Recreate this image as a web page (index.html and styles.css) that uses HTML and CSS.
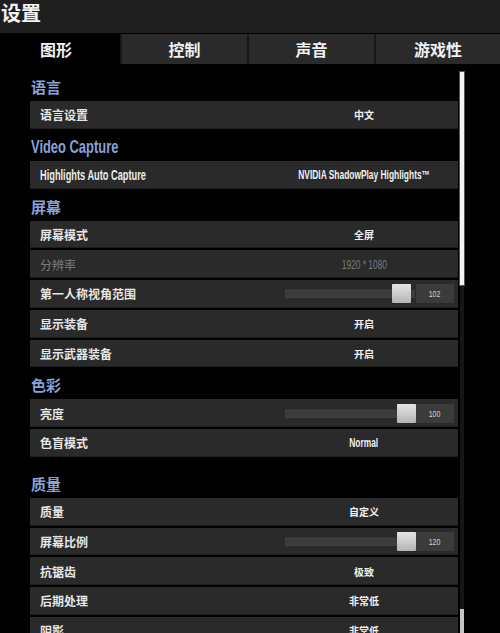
FILE: index.html
```html
<!DOCTYPE html>
<html>
<head>
    <title>设置</title>
    <meta charset="utf-8">
    <link rel="stylesheet" href="styles.css">
</head>
<body>
    <div class="topbar">
        <h1 class="title">设置</h1>
    </div>

    <div class="tabs">
        <div class="tab active">图形</div>
        <div class="tab">控制</div>
        <div class="tab">声音</div>
        <div class="tab">游戏性</div>
    </div>

    <div class="main">
        <div class="list">
            <h2 class="section">语言</h2>
            <div class="row">
                <span class="label">语言设置</span>
                <span class="value">中文</span>
            </div>

            <h2 class="section"><span class="narrow latin-title">Video Capture</span></h2>
            <div class="row">
                <span class="label"><span class="narrow latin-label">Highlights Auto Capture</span></span>
                <span class="value"><span class="narrow latin-value">NVIDIA ShadowPlay Highlights™</span></span>
            </div>

            <h2 class="section">屏幕</h2>
            <div class="row">
                <span class="label">屏幕模式</span>
                <span class="value">全屏</span>
            </div>
            <div class="row disabled">
                <span class="label">分辨率</span>
                <span class="value"><span class="narrow latin-value">1920 * 1080</span></span>
            </div>
            <div class="row">
                <span class="label">第一人称视角范围</span>
                <div class="slider">
                    <div class="track"><div class="thumb" style="left: 107px"></div></div>
                    <span class="num"><span class="narrow">102</span></span>
                </div>
            </div>
            <div class="row">
                <span class="label">显示装备</span>
                <span class="value">开启</span>
            </div>
            <div class="row">
                <span class="label">显示武器装备</span>
                <span class="value">开启</span>
            </div>

            <h2 class="section">色彩</h2>
            <div class="row">
                <span class="label">亮度</span>
                <div class="slider">
                    <div class="track"><div class="thumb" style="left: 112px"></div></div>
                    <span class="num"><span class="narrow">100</span></span>
                </div>
            </div>
            <div class="row">
                <span class="label">色盲模式</span>
                <span class="value"><span class="narrow latin-value">Normal</span></span>
            </div>

            <div class="spacer"></div>
            <h2 class="section">质量</h2>
            <div class="row">
                <span class="label">质量</span>
                <span class="value">自定义</span>
            </div>
            <div class="row">
                <span class="label">屏幕比例</span>
                <div class="slider">
                    <div class="track"><div class="thumb" style="left: 112px"></div></div>
                    <span class="num"><span class="narrow">120</span></span>
                </div>
            </div>
            <div class="row">
                <span class="label">抗锯齿</span>
                <span class="value">极致</span>
            </div>
            <div class="row">
                <span class="label">后期处理</span>
                <span class="value">非常低</span>
            </div>
            <div class="row">
                <span class="label">阴影</span>
                <span class="value">非常低</span>
            </div>
        </div>

        <div class="scrollbar">
            <div class="scroll-thumb"></div>
            <div class="scroll-end"></div>
        </div>
    </div>
</body>
</html>
```

FILE: styles.css
```css
html, body {
    margin: 0;
    padding: 0;
    height: 100%;
    overflow: hidden;
}

body {
    background: #000;
    color: #e8e8e8;
    font-family: 'Noto Sans CJK SC', 'Noto Sans', sans-serif;
}

.topbar {
    height: 33px;
    background: #1f1f1f;
}

.title {
    margin: 0;
    padding: 2px 0 0 1px;
    font-size: 20px;
    line-height: 21px;
    font-weight: 700;
    color: #f2f2f2;
}

.tabs {
    display: grid;
    grid-template-columns: 120px 127px 127px 1fr;
    height: 30px;
    margin-top: 1px;
}

.tab {
    display: flex;
    align-items: center;
    justify-content: center;
    background: #2a2a2a;
    border-left: 2px solid #181818;
    font-size: 16px;
    font-weight: 700;
    color: #f0f0f0;
}

.tab.active {
    background: #000;
    border-left: none;
    justify-content: flex-start;
    padding-left: 40px;
}

.main {
    display: flex;
    padding-top: 7px;
}

.list {
    width: 428px;
    margin-left: 30px;
}

.section {
    margin: 0;
    height: 30px;
    line-height: 32px;
    padding-left: 1px;
    font-size: 15px;
    font-weight: 700;
    color: #86a2d6;
    white-space: nowrap;
}

/* no condensed face installed, so squeeze the latin text */
.narrow {
    display: inline-block;
    font-family: 'Liberation Sans', Arial, sans-serif;
    white-space: nowrap;
    transform: scaleX(0.78);
}

.latin-title {
    font-size: 19px;
    font-weight: 700;
    transform: scaleX(0.68);
    transform-origin: left center;
}

.latin-label {
    font-size: 14px;
    font-weight: 700;
    color: #ececec;
    transform: scaleX(0.66);
    transform-origin: left center;
}

.latin-value {
    font-size: 12px;
    font-weight: 700;
    transform: scaleX(0.7);
}

.spacer {
    height: 9px;
}

.row {
    display: grid;
    grid-template-columns: 1fr 188px;
    align-items: center;
    height: 27.75px;
    margin-bottom: 2px;
    background: #2a2a2a;
    box-shadow: inset 0 -1px 0 #1c1c1c;
}

.label {
    padding-left: 10px;
    font-size: 12px;
    font-weight: 700;
    color: #e6e6e6;
    white-space: nowrap;
}

.value {
    text-align: center;
    font-size: 10px;
    font-weight: 700;
    color: #f0f0f0;
    white-space: nowrap;
}

.row.disabled .label,
.row.disabled .value {
    color: #7c7c7c;
}

.row.disabled .label,
.row.disabled .latin-value {
    font-weight: 400;
}

.slider {
    display: flex;
    align-items: center;
    margin-left: 15px;
    padding-right: 4px;
}

.track {
    position: relative;
    flex: 1;
    height: 9px;
    background: #3d3d3d;
    box-shadow: inset 0 1px 0 #333;
}

.thumb {
    position: absolute;
    top: -5px;
    width: 19px;
    height: 19px;
    background: linear-gradient(#e4e4e4, #b4b4b4);
    border-radius: 1px;
}

.num {
    width: 38px;
    height: 19px;
    line-height: 19px;
    margin-left: 1px;
    background: #3b3b3b;
    text-align: center;
    font-size: 9px;
    color: #d0d0d0;
}

.scrollbar {
    display: flex;
    flex-direction: column;
    width: 4px;
    height: 563px;
    margin-left: 2px;
    background: #161616;
}

.scroll-thumb {
    height: 213px;
    margin-top: 1px;
    background: #f4f4f4;
    box-shadow: 0 0 0 1px #555;
}

.scroll-end {
    margin-top: auto;
    height: 25px;
    background: #c4c4c4;
}
```
